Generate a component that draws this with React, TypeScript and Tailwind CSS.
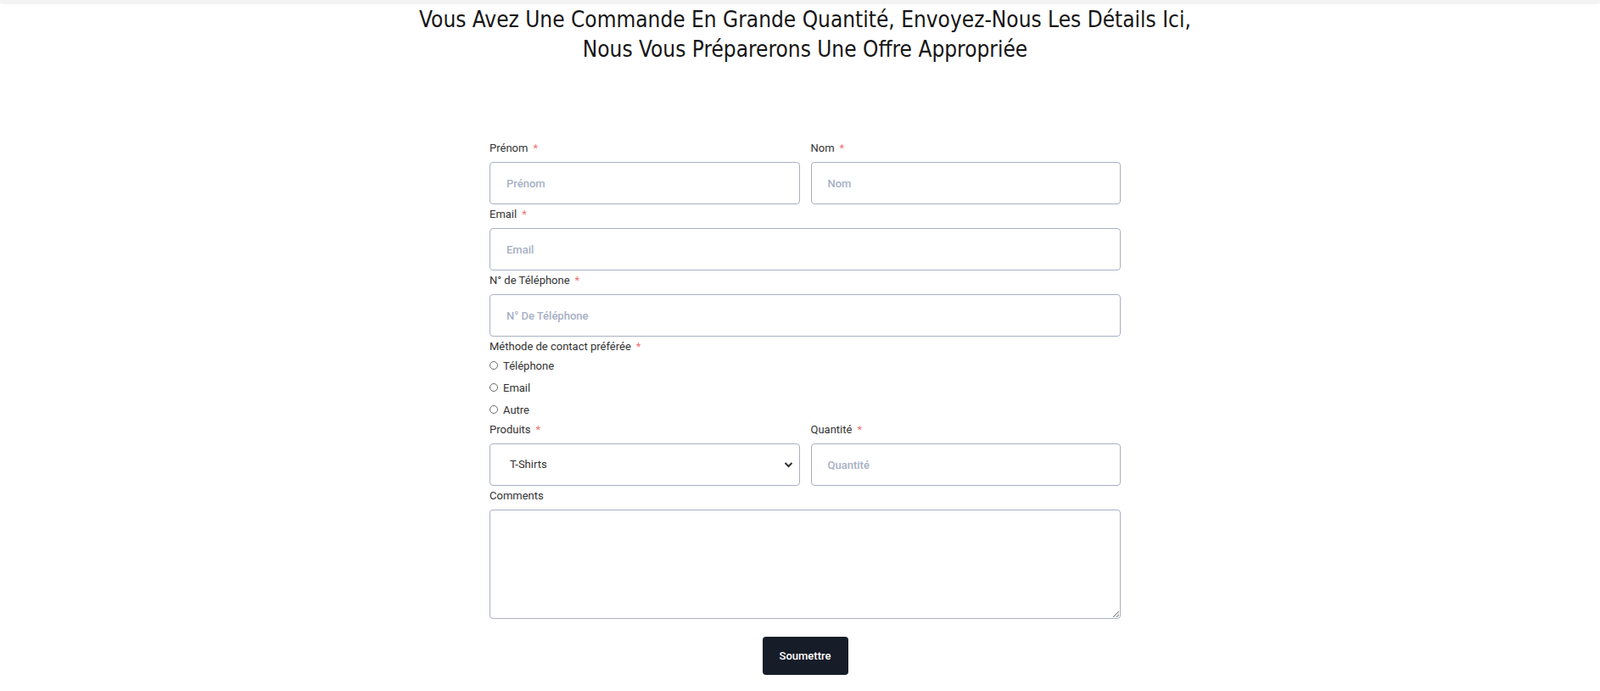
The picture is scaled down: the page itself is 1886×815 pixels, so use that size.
import type { ReactNode } from "react";

const labelCls = "block h-[20px] leading-[20px] text-[13px] text-[#333]";
const inputCls =
  "block w-full h-[50px] rounded-[4px] border border-[#a9b0c3] bg-white pl-[19px] pr-3 text-[13px] text-[#333] outline-none placeholder:text-[#a8b0c4] placeholder:font-medium";

function Label({ text, required, className = "" }: { text: string; required?: boolean; className?: string }) {
  return (
    <label className={`${labelCls} ${className}`}>
      {text}
      {required && <span className="ml-[6px] text-[#f07373]">*</span>}
    </label>
  );
}

function Field({ label, required, children }: { label: string; required?: boolean; children: ReactNode }) {
  return (
    <div className="pt-[2px]">
      <Label text={label} required={required} className="mb-[6px]" />
      {children}
    </div>
  );
}

export default function App() {
  return (
    <div className="min-h-screen bg-white font-['Roboto','Liberation_Sans',sans-serif]">
      <div className="h-[3px] bg-[#f3f3f3] shadow-[0_1px_3px_rgba(0,0,0,0.1)]" />
      <div className="pl-[12px]">
        <h2 className="mt-[3px] text-center text-[26px] leading-[35px] text-[#161616] font-['Liberation_Sans_Narrow','DejaVu_Sans_Condensed',sans-serif]">
          Vous Avez Une Commande En Grande Quantité, Envoyez-Nous Les Détails Ici,
          <br />
          Nous Vous Préparerons Une Offre Appropriée
        </h2>

        <form className="mx-auto mt-[87px] w-[744px]" onSubmit={(e) => e.preventDefault()}>
          <div className="grid grid-cols-2 gap-x-[13px]">
            <Field label="Prénom" required>
              <input className={inputCls} placeholder="Prénom" />
            </Field>
            <Field label="Nom" required>
              <input className={inputCls} placeholder="Nom" />
            </Field>
          </div>

          <Field label="Email" required>
            <input className={inputCls} placeholder="Email" />
          </Field>

          <Field label="N° de Téléphone" required>
            <input className={inputCls} placeholder="N° De Téléphone" />
          </Field>

          <div className="pt-[2px]">
            <Label text="Méthode de contact préférée" required />
            {["Téléphone", "Email", "Autre"].map((opt) => (
              <label key={opt} className="flex h-[26px] items-center text-[13px] text-[#333]">
                <span className="mb-[3px] inline-block h-[10px] w-[10px] rounded-full border border-[#6b6b6b] bg-white" />
                <span className="ml-[6px]">{opt}</span>
              </label>
            ))}
          </div>

          <div className="grid grid-cols-2 gap-x-[13px]">
            <div>
              <Label text="Produits" required className="mb-[6px]" />
              <div className="relative">
                <select className={`${inputCls} appearance-none pl-[23px] text-[#333]`} defaultValue="T-Shirts">
                  <option>T-Shirts</option>
                  <option>Sweats</option>
                  <option>Casquettes</option>
                </select>
                <svg
                  className="pointer-events-none absolute right-[8px] top-1/2 -translate-y-1/2"
                  width="11"
                  height="8"
                  viewBox="0 0 11 8"
                  fill="none"
                >
                  <path d="M1.5 2 L5.5 6 L9.5 2" stroke="#333" strokeWidth="2" />
                </svg>
              </div>
            </div>
            <div>
              <Label text="Quantité" required className="mb-[6px]" />
              <input className={inputCls} placeholder="Quantité" />
            </div>
          </div>

          <Field label="Comments">
            <textarea className="block h-[129px] w-full rounded-[4px] border border-[#a9b0c3] bg-white p-3 text-[13px] outline-none" />
          </Field>

          <div className="mt-[21px] flex justify-center">
            <button
              type="submit"
              className="h-[45px] w-[101px] rounded-[4px] bg-[#171c29] text-[13px] font-medium text-white"
            >
              Soumettre
            </button>
          </div>
        </form>
      </div>
    </div>
  );
}
